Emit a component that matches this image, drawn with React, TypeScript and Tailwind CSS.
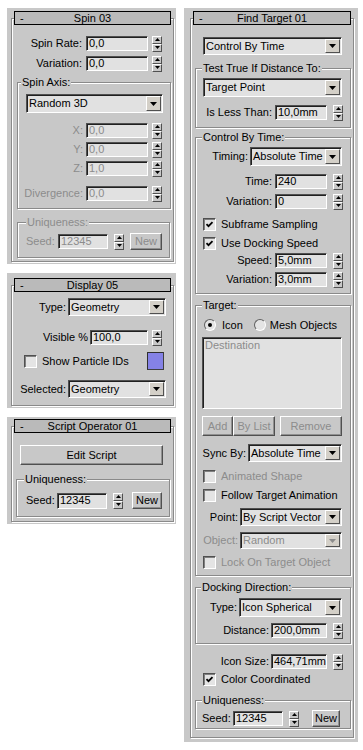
import React from 'react';

const PANEL = 'bg-[#c8c8c8]';
const SUNKEN = 'border border-t-[#505050] border-l-[#505050] border-b-white border-r-white';
const RAISED = 'border border-t-white border-l-white border-b-[#505050] border-r-[#505050]';
const ETCHED = 'border border-[#8a8a8a] shadow-[1px_1px_0_#fff,inset_1px_1px_0_#fff]';
const DIS = 'text-[#8c8c8c]';

function Arrow({ down }: { down?: boolean }) {
  return (
    <svg width="5" height="3" viewBox="0 0 5 3">
      <path d={down ? 'M0 0H5L2.5 3z' : 'M2.5 0L5 3H0z'} fill="#000" />
    </svg>
  );
}

function Spinner({ className = '' }: { className?: string }) {
  return (
    <div className={`flex flex-col w-[10px] h-[16px] shrink-0 ${className}`}>
      <div className={`${RAISED} ${PANEL} flex-1 flex items-center justify-center`}>
        <Arrow />
      </div>
      <div className={`${RAISED} ${PANEL} flex-1 flex items-center justify-center`}>
        <Arrow down />
      </div>
    </div>
  );
}

function Field({ value, className, disabled }: { value: string; className: string; disabled?: boolean }) {
  return (
    <div
      className={`${SUNKEN} shadow-[inset_1px_1px_0_#202020] bg-[#e1e1e1] flex items-center pl-[2px] overflow-hidden whitespace-nowrap shrink-0 ${className} ${disabled ? DIS : ''}`}
    >
      {value}
    </div>
  );
}

function Combo({ value, className, disabled }: { value: string; className: string; disabled?: boolean }) {
  return (
    <div
      className={`${SUNKEN} shadow-[inset_1px_1px_0_#202020] bg-[#e1e1e1] flex items-center shrink-0 ${className} ${disabled ? DIS : ''}`}
    >
      <span className="flex-1 pl-[2px] truncate">{value}</span>
      <div className={`${RAISED} bg-[#d4d0c8] w-[15px] h-[calc(100%-2px)] mr-[1px] flex items-center justify-center`}>
        <svg width="7" height="4" viewBox="0 0 7 4">
          <path d="M0 0H7L3.5 4z" fill={disabled ? '#8c8c8c' : '#000'} />
        </svg>
      </div>
    </div>
  );
}

function Check({ checked, className = '' }: { checked?: boolean; className?: string }) {
  return (
    <div
      className={`${SUNKEN} shadow-[inset_1px_1px_0_#808080] bg-[#e4e4e4] w-[13px] h-[13px] flex items-center justify-center shrink-0 ${className}`}
    >
      {checked && (
        <svg width="9" height="9" viewBox="0 0 9 9">
          <path d="M1.5 4.2L3.5 6.2L7.5 2.2" stroke="#000" strokeWidth="1.8" fill="none" />
        </svg>
      )}
    </div>
  );
}

function Radio({ on, className = '' }: { on?: boolean; className?: string }) {
  return (
    <div
      className={`w-[12px] h-[12px] rounded-full border border-t-[#606060] border-l-[#606060] border-b-white border-r-white bg-[#e4e4e4] flex items-center justify-center shrink-0 ${className}`}
    >
      {on && <div className="w-[4px] h-[4px] rounded-full bg-black" />}
    </div>
  );
}

function Btn({ label, className, disabled }: { label: string; className: string; disabled?: boolean }) {
  return (
    <div
      className={`${RAISED} shadow-[inset_-1px_-1px_0_#909090] flex items-center justify-center shrink-0 ${className} ${disabled ? DIS : ''}`}
    >
      {label}
    </div>
  );
}

function Group({
  label,
  className,
  labelPos,
  disabled,
  children,
}: {
  label: string;
  className: string;
  labelPos: string;
  disabled?: boolean;
  children: React.ReactNode;
}) {
  return (
    <div className={`relative ${ETCHED} flex flex-col shrink-0 ${className}`}>
      <span className={`absolute -top-[7px] px-[1px] ${PANEL} ${labelPos} ${disabled ? DIS : ''}`}>{label}</span>
      {children}
    </div>
  );
}

function Rollout({
  title,
  outer,
  frame,
  children,
}: {
  title: string;
  outer: string;
  frame: string;
  children: React.ReactNode;
}) {
  return (
    <div className={`${PANEL} shrink-0 ${outer}`}>
      <div className={`${ETCHED} flex flex-col ${frame}`}>
        <div className="-mt-[8px] mx-[2px] h-[14px] border border-black bg-[#bababa] flex items-center">
          <span className="w-[14px] pl-[5px]">-</span>
          <span className="flex-1 text-center">{title}</span>
          <span className="w-[14px]" />
        </div>
        {children}
      </div>
    </div>
  );
}

function SpinRow({
  label,
  value,
  labelW,
  fieldW,
  className,
  disabled,
  gap = 'ml-[3px]',
  spinGap = 'ml-[4px]',
}: {
  label: string;
  value: string;
  labelW: string;
  fieldW: string;
  className: string;
  disabled?: boolean;
  gap?: string;
  spinGap?: string;
}) {
  return (
    <div className={`flex items-center h-[15px] ${className}`}>
      <span className={`text-right shrink-0 whitespace-nowrap ${labelW} ${disabled ? DIS : ''}`}>{label}</span>
      <Field value={value} className={`${gap} ${fieldW} h-[15px]`} disabled={disabled} />
      <Spinner className={spinGap} />
    </div>
  );
}

export default function App() {
  return (
    <div className="w-[363px] h-[750px] bg-white flex pt-[8px] pl-[7px] text-[11px] leading-[13px] text-black font-['Liberation_Sans',Arial,sans-serif]">
      {/* left column */}
      <div className="flex flex-col w-[169px]">
        <Rollout title="Spin 03" outer="h-[256px] pt-[10px] pl-[4px] pr-[2px]" frame="h-[244px]">
          <SpinRow label="Spin Rate:" value="0,0" labelW="w-[70px]" fieldW="w-[62px]" gap="ml-[4px]" className="mt-[11px]" />
          <SpinRow label="Variation:" value="0,0" labelW="w-[70px]" fieldW="w-[62px]" gap="ml-[4px]" className="mt-[5px]" />
          <Group label="Spin Axis:" labelPos="left-[3px]" className="mt-[11px] ml-[5px] w-[154px] h-[127px]">
            <Combo value="Random 3D" className="mt-[11px] ml-[8px] w-[137px] h-[19px]" />
            <SpinRow label="X:" value="0,0" labelW="w-[65px]" fieldW="w-[62px]" className="mt-[10px]" disabled />
            <SpinRow label="Y:" value="0,0" labelW="w-[65px]" fieldW="w-[62px]" className="mt-[4px]" disabled />
            <SpinRow label="Z:" value="1,0" labelW="w-[65px]" fieldW="w-[62px]" className="mt-[4px]" disabled />
            <SpinRow label="Divergence:" value="0,0" labelW="w-[65px]" fieldW="w-[62px]" className="mt-[10px]" disabled />
          </Group>
          <Group label="Uniqueness:" labelPos="left-[8px]" className="mt-[13px] ml-[5px] w-[153px] h-[36px]" disabled>
            <div className="flex items-center h-[17px] mt-[10px] ml-[8px]">
              <span className={`w-[32px] ${DIS}`}>Seed:</span>
              <Field value="12345" className="w-[50px] h-[15px]" disabled />
              <Spinner className="ml-[6px]" />
              <Btn label="New" className="ml-[6px] w-[32px] h-[17px]" disabled />
            </div>
          </Group>
        </Rollout>

        <Rollout title="Display 05" outer="mt-[9px] h-[135px] pt-[12px] pl-[4px] pr-[2px]" frame="h-[121px]">
          <div className="flex items-center h-[18px] mt-[6px]">
            <span className="w-[54px] text-right">Type:</span>
            <Combo value="Geometry" className="ml-[2px] w-[98px] h-[18px]" />
          </div>
          <SpinRow label="Visible %" value="100,0" labelW="w-[76px]" fieldW="w-[58px]" gap="ml-[2px]" className="mt-[14px]" />
          <div className="flex items-center h-[18px] mt-[7px]">
            <Check className="ml-[12px]" />
            <span className="ml-[5px]">Show Particle IDs</span>
            <div className="ml-auto mr-[9px] w-[17px] h-[18px] bg-[#8582e6] border border-t-[#303030] border-l-[#303030] border-b-[#404040] border-r-[#404040]" />
          </div>
          <div className="flex items-center h-[18px] mt-[10px]">
            <span className="w-[54px] text-right">Selected:</span>
            <Combo value="Geometry" className="ml-[2px] w-[98px] h-[18px]" />
          </div>
        </Rollout>

        <Rollout title="Script Operator 01" outer="mt-[9px] h-[107px] pt-[9px] pl-[4px] pr-[2px]" frame="h-[96px]">
          <Btn label="Edit Script" className="mt-[12px] ml-[8px] w-[143px] h-[20px]" />
          <Group label="Uniqueness:" labelPos="left-[7px]" className="mt-[14px] ml-[4px] w-[154px] h-[38px]">
            <div className="flex items-center h-[17px] mt-[12px] ml-[9px]">
              <span className="w-[31px]">Seed:</span>
              <Field value="12345" className="w-[50px] h-[16px]" />
              <Spinner className="ml-[6px]" />
              <Btn label="New" className="ml-[9px] w-[30px] h-[17px]" />
            </div>
          </Group>
        </Rollout>
      </div>

      {/* right column */}
      <div className="ml-[8px] flex flex-col w-[174px]">
        <Rollout title="Find Target 01" outer="h-[734px] pt-[10px] pl-[6px] pr-[4px]" frame="h-[720px]">
          <Combo value="Control By Time" className="mt-[12px] ml-[12px] w-[139px] h-[18px]" />

          <Group label="Test True If Distance To:" labelPos="left-[6px]" className="mt-[13px] ml-[4px] w-[156px] h-[60px]">
            <Combo value="Target Point" className="mt-[9px] ml-[7px] w-[139px] h-[19px]" />
            <SpinRow label="Is Less Than:" value="10,0mm" labelW="w-[76px]" fieldW="w-[52px]" spinGap="ml-[6px]" className="mt-[8px]" />
          </Group>

          <Group label="Control By Time:" labelPos="left-[6px]" className="mt-[9px] ml-[4px] w-[156px] h-[157px]">
            <div className="flex items-center h-[19px] mt-[9px]">
              <span className="w-[52px] text-right">Timing:</span>
              <Combo value="Absolute Time" className="ml-[2px] w-[92px] h-[19px]" />
            </div>
            <SpinRow label="Time:" value="240" labelW="w-[76px]" fieldW="w-[52px]" spinGap="ml-[6px]" className="mt-[8px]" />
            <SpinRow label="Variation:" value="0" labelW="w-[76px]" fieldW="w-[52px]" spinGap="ml-[6px]" className="mt-[5px]" />
            <div className="flex items-center h-[13px] mt-[9px]">
              <Check checked className="ml-[7px]" />
              <span className="ml-[5px]">Subframe Sampling</span>
            </div>
            <div className="flex items-center h-[13px] mt-[6px]">
              <Check checked className="ml-[7px]" />
              <span className="ml-[5px]">Use Docking Speed</span>
            </div>
            <SpinRow label="Speed:" value="5,0mm" labelW="w-[76px]" fieldW="w-[52px]" spinGap="ml-[6px]" className="mt-[3px]" />
            <SpinRow label="Variation:" value="3,0mm" labelW="w-[76px]" fieldW="w-[52px]" spinGap="ml-[6px]" className="mt-[4px]" />
          </Group>

          <Group label="Target:" labelPos="left-[6px]" className="mt-[11px] ml-[4px] w-[156px] h-[271px]">
            <div className="flex items-center h-[12px] mt-[13px]">
              <Radio on className="ml-[8px]" />
              <span className="ml-[6px]">Icon</span>
              <Radio className="ml-[11px]" />
              <span className="ml-[4px]">Mesh Objects</span>
            </div>
            <div className={`${SUNKEN} shadow-[inset_1px_1px_0_#202020] bg-[#e1e1e1] mt-[6px] ml-[6px] w-[140px] h-[72px] pl-[2px] pt-[1px] ${DIS}`}>
              Destination
            </div>
            <div className="flex h-[20px] mt-[7px] ml-[6px]">
              <Btn label="Add" className="w-[31px] h-[20px]" disabled />
              <Btn label="By List" className="w-[42px] h-[20px]" disabled />
              <Btn label="Remove" className="ml-[5px] w-[62px] h-[20px]" disabled />
            </div>
            <div className="flex items-center h-[18px] mt-[8px]">
              <span className="w-[50px] text-right">Sync By:</span>
              <Combo value="Absolute Time" className="ml-[2px] w-[94px] h-[18px]" />
            </div>
            <div className="flex items-center h-[13px] mt-[8px]">
              <Check className="ml-[7px]" />
              <span className={`ml-[5px] ${DIS}`}>Animated Shape</span>
            </div>
            <div className="flex items-center h-[13px] mt-[6px]">
              <Check className="ml-[7px]" />
              <span className="ml-[5px]">Follow Target Animation</span>
            </div>
            <div className="flex items-center h-[18px] mt-[6px]">
              <span className="w-[42px] text-right">Point:</span>
              <Combo value="By Script Vector" className="ml-[2px] w-[102px] h-[18px]" />
            </div>
            <div className="flex items-center h-[17px] mt-[6px]">
              <span className={`w-[42px] text-right ${DIS}`}>Object:</span>
              <Combo value="Random" className="ml-[2px] w-[102px] h-[17px]" disabled />
            </div>
            <div className="flex items-center h-[13px] mt-[7px]">
              <Check className="ml-[7px]" />
              <span className={`ml-[5px] ${DIS}`}>Lock On Target Object</span>
            </div>
          </Group>

          <Group label="Docking Direction:" labelPos="left-[5px]" className="mt-[11px] ml-[4px] w-[156px] h-[57px]">
            <div className="flex items-center h-[19px] mt-[10px]">
              <span className="w-[41px] text-right">Type:</span>
              <Combo value="Icon Spherical" className="ml-[2px] w-[103px] h-[19px]" />
            </div>
            <SpinRow label="Distance:" value="200,0mm" labelW="w-[73px]" fieldW="w-[56px]" gap="ml-[2px]" spinGap="ml-[6px]" className="mt-[6px]" />
          </Group>

          <SpinRow label="Icon Size:" value="464,71mm" labelW="w-[78px]" fieldW="w-[56px]" gap="ml-[2px]" spinGap="ml-[6px]" className="mt-[10px]" />
          <div className="flex items-center h-[13px] mt-[4px]">
            <Check checked className="ml-[12px]" />
            <span className="ml-[5px]">Color Coordinated</span>
          </div>

          <Group label="Uniqueness:" labelPos="left-[6px]" className="mt-[14px] ml-[4px] w-[156px] h-[29px]">
            <div className="flex items-center h-[17px] mt-[9px] ml-[6px]">
              <span className="w-[31px]">Seed:</span>
              <Field value="12345" className="w-[50px] h-[15px]" />
              <Spinner className="ml-[6px]" />
              <Btn label="New" className="ml-[13px] w-[28px] h-[17px]" />
            </div>
          </Group>
        </Rollout>
      </div>
    </div>
  );
}
